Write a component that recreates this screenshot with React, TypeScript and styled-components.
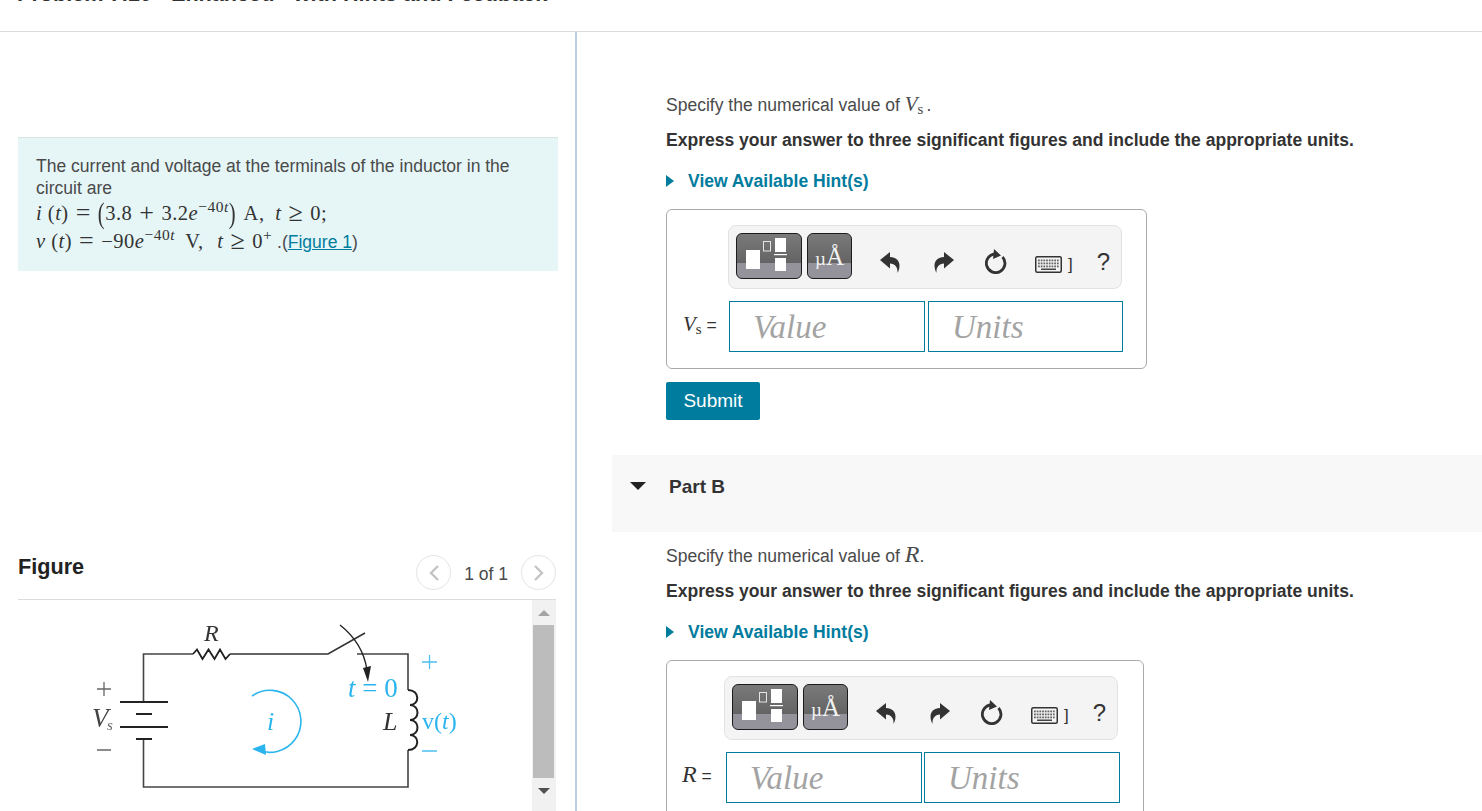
import React from 'react';
import styled, { createGlobalStyle } from 'styled-components';

const GlobalStyle = createGlobalStyle`
    html, body {
        margin: 0;
        padding: 0;
        background: #fff;
        font-family: "Liberation Sans", Arial, sans-serif;
        font-size: 17.55px;
        color: #4a4a4a;
    }
`;

const Page = styled.div`
    width: 1482px;
    height: 811px;
    overflow: hidden;
    display: flex;
    flex-direction: column;
`;

const Header = styled.header`
    height: 31px;
    flex: none;
    overflow: hidden;
    border-bottom: 1px solid #dcdcdc;
    padding-left: 17px;
`;

const Title = styled.h1`
    margin: -19px 0 0;
    font-size: 21.65px;
    line-height: 26px;
    font-weight: bold;
    color: #333;
    white-space: nowrap;
`;

const Columns = styled.div`
    flex: 1;
    display: flex;
    min-height: 0;
`;

const LeftPane = styled.div`
    width: 575px;
    flex: none;
    border-right: 2px solid #b9cee0;
    padding-top: 105px;
    display: flex;
    flex-direction: column;
    align-items: flex-start;
`;

const RightPane = styled.div`
    flex: 1;
    padding-left: 35px;
    padding-top: 62px;
`;

const Intro = styled.div`
    margin-left: 18px;
    width: 504px;
    height: 116px;
    padding: 17px 18px 0;
    background: #e6f6f7;
    border-top: 1px solid #d8e2e2;
    line-height: 22px;
    color: #4a4a4a;
`;

const MathLine = styled.div`
    font-family: "Liberation Serif", "DejaVu Serif", serif;
    font-size: 20.5px;
    letter-spacing: 0.5px;
    line-height: 28px;
    height: 28px;
    white-space: nowrap;
    color: #333;
`;

const Mi = styled.i`
    font-family: "Liberation Serif", serif;
`;

const Op = styled.span`
    font-size: 26px;
    line-height: 0;
    vertical-align: -1px;
    margin: 0 7px;
`;

const Paren = styled.span`
    display: inline-block;
    line-height: 20px;
    font-weight: 300;
    transform: scaleY(1.4);
`;

const Sup = styled.sup`
    font-size: 15.5px;
    line-height: 0;
    vertical-align: 8px;
`;

const Gap = styled.span<{ $w: number }>`
    display: inline-block;
    width: ${p => p.$w}px;
`;

const FigureLink = styled.a`
    font-family: "Liberation Sans", Arial, sans-serif;
    color: #007c9e;
    letter-spacing: 0;
    text-decoration: underline;
`;

const Plain = styled.span`
    font-family: "Liberation Sans", Arial, sans-serif;
    font-size: 17.55px;
    letter-spacing: 0;
    color: #4a4a4a;
`;

const FigureHead = styled.div`
    margin: 275px 0 0 18px;
    width: 538px;
    height: 54px;
    box-sizing: border-box;
    border-bottom: 1px solid #dcdcdc;
    display: flex;
    justify-content: space-between;
    align-items: flex-start;
`;

const FigureTitle = styled.h2`
    margin: 8px 0 0;
    font-size: 21.65px;
    line-height: 26px;
    font-weight: bold;
    color: #222;
`;

const Pager = styled.div`
    display: flex;
    align-items: center;
    margin-top: 9px;
`;

const PagerButton = styled.div`
    width: 33px;
    height: 33px;
    border: 1px solid #e4e4e4;
    border-radius: 50%;
    display: flex;
    align-items: center;
    justify-content: center;
    background: #fff;
`;

const PagerText = styled.span`
    margin: 3px 13px 0;
    color: #4a4a4a;
`;

const FigureBody = styled.div`
    margin-left: 18px;
    width: 538px;
    height: 211px;
    display: flex;
`;

const CircuitArea = styled.div`
    flex: 1;
    filter: blur(0.3px);
`;

const Scrollbar = styled.div`
    width: 24px;
    flex: none;
    background: #f1f1f1;
    display: flex;
    flex-direction: column;
    align-items: center;
    padding: 0 2px 0 1px;
    box-sizing: border-box;
`;

const ScrollArrow = styled.div<{ $down?: boolean }>`
    height: 25px;
    flex: none;
    display: flex;
    align-items: center;
    justify-content: center;
    &::before {
        content: "";
        border-left: 6px solid transparent;
        border-right: 6px solid transparent;
        ${p => p.$down ? 'border-top: 6px solid #505050;' : 'border-bottom: 6px solid #a3a3a3;'}
    }
`;

const ScrollThumb = styled.div`
    width: 100%;
    height: 153px;
    flex: none;
    background: #bcbcbc;
`;

const Part = styled.section`
    padding-left: 54px;
`;

const Prompt = styled.p<{ $top?: number }>`
    margin: ${p => p.$top ?? 0}px 0 0;
    line-height: 22px;
    color: #4a4a4a;
`;

const Instruction = styled.p`
    margin: 13px 0 0;
    line-height: 22px;
    font-weight: bold;
    color: #333;
`;

const Hint = styled.div`
    margin-top: 19px;
    height: 22px;
    display: flex;
    align-items: center;
    gap: 14px;
    font-weight: bold;
    color: #007c9e;
`;

const HintArrow = styled.span`
    border-top: 6px solid transparent;
    border-bottom: 6px solid transparent;
    border-left: 8px solid #007c9e;
`;

const AnswerBox = styled.div<{ $width: number; $pad: number }>`
    margin-top: 17px;
    width: ${p => p.$width}px;
    height: 160px;
    box-sizing: border-box;
    border: 1px solid #aaa;
    border-radius: 6px;
    padding: 15px 0 0 ${p => p.$pad}px;
`;

const Toolbar = styled.div`
    width: 394px;
    height: 64px;
    box-sizing: border-box;
    border: 1px solid #e2e2e2;
    border-radius: 8px;
    background: #f4f4f4;
    display: flex;
    align-items: flex-start;
    padding: 7px 0 0 7px;
`;

const ToolButton = styled.div<{ $width: number }>`
    width: ${p => p.$width}px;
    height: 46px;
    box-sizing: border-box;
    flex: none;
    margin-right: 5px;
    border: 1px solid #1c1c1c;
    border-radius: 6px;
    background: linear-gradient(#7a7a7a 0, #636363 67%, #94939c 67%, #94939c 100%);
    display: flex;
    align-items: center;
    justify-content: center;
`;

const UnitGlyph = styled.span`
    font-family: "Liberation Serif", serif;
    font-size: 25px;
    line-height: 30px;
    color: #f2f2f2;
    white-space: nowrap;
    margin-top: 4px;
`;

const MicroGlyph = styled.span`
    font-size: 19px;
`;

const IconSlot = styled.div<{ $left: number; $top?: number }>`
    margin-left: ${p => p.$left}px;
    margin-top: ${p => p.$top ?? 16}px;
    height: 25px;
    display: flex;
    align-items: center;
    flex: none;
`;

const HelpMark = styled.span`
    margin: 14px 0 0 24px;
    font-size: 24px;
    line-height: 30px;
    color: #333;
`;

const BracketMark = styled.span`
    margin-left: 6px;
    font-size: 17px;
    color: #333;
`;

const InputRow = styled.div`
    display: flex;
    align-items: center;
    margin-top: 12px;
`;

const SymbolLabel = styled.label<{ $width: number; $left: number }>`
    width: ${p => p.$width}px;
    margin-left: ${p => p.$left}px;
    margin-top: -2px;
    flex: none;
    font-size: 17.55px;
    color: #333;
    white-space: nowrap;
`;

const SerifLetter = styled.i<{ $size?: number }>`
    font-family: "Liberation Serif", serif;
    font-size: ${p => p.$size ?? 21}px;
    line-height: 0;
`;

const SubLetter = styled.span`
    font-family: "Liberation Serif", serif;
    font-size: 15px;
    vertical-align: -3px;
    line-height: 0;
`;

const Dot = styled.span`
    margin-left: 3px;
`;

const AnswerInput = styled.input<{ $gap: number; $width: number }>`
    width: ${p => p.$width}px;
    height: 51px;
    box-sizing: border-box;
    flex: none;
    margin-right: ${p => p.$gap}px;
    border: 1px solid #007c9e;
    border-radius: 0;
    padding: 2px 0 0 23px;
    background: #fff;
    font-family: "Liberation Serif", serif;
    font-style: italic;
    font-size: 33px;
    outline: none;
    &::placeholder {
        color: #a3a3a3;
        opacity: 1;
    }
`;

const SubmitButton = styled.button`
    display: block;
    margin-top: 13px;
    width: 94px;
    height: 38px;
    border: 0;
    border-radius: 2px;
    background: #007c9e;
    color: #fff;
    font-family: "Liberation Sans", Arial, sans-serif;
    font-size: 19px;
`;

const PartBand = styled.div`
    margin-top: 35px;
    height: 77px;
    background: #f8f8f8;
    display: flex;
    align-items: flex-start;
    padding: 21px 0 0 18px;
    box-sizing: border-box;
`;

const PartArrow = styled.span`
    margin-top: 6px;
    border-left: 8px solid transparent;
    border-right: 8px solid transparent;
    border-top: 8px solid #222;
`;

const PartTitle = styled.span`
    margin-left: 23px;
    font-size: 19px;
    font-weight: bold;
    line-height: 22px;
    color: #333;
`;

const Chevron = ({ flip }: { flip?: boolean }) => (
    <svg width="12" height="18" viewBox="0 0 12 18" fill="none" stroke="#c4c4c4" strokeWidth="2.4">
        <path d={flip ? 'M2 2l7 7-7 7' : 'M10 2L3 9l7 7'} />
    </svg>
);

const TemplateIcon = () => (
    <svg width="46" height="36" viewBox="0 0 46 36" fill="#fff">
        <rect x="0" y="12" width="14" height="19" />
        <rect x="17.5" y="3.5" width="7" height="9.5" fill="none" stroke="#e4e4e4" strokeWidth="1" />
        <rect x="29" y="0" width="11" height="14" />
        <rect x="28" y="16" width="13" height="1.2" />
        <rect x="29" y="20" width="11" height="13" />
    </svg>
);

const UndoIcon = ({ flip }: { flip?: boolean }) => (
    <svg width="20" height="22" viewBox="0 0 20 22" fill="#333" style={flip ? { transform: 'scaleX(-1)' } : undefined}>
        <path d="M0 9 10 1v5c6 0 9.5 4 9.5 8.5 0 3-1 5.5-2 7.5 .5-5-2-9.5-7.5-9.5v5z" />
    </svg>
);

const ResetIcon = () => (
    <svg width="22" height="25" viewBox="0 0 22 25" fill="none">
        <path d="M10.5 5A9.3 9.3 0 1 0 17.5 8" stroke="#333" strokeWidth="2.8" />
        <path d="M9 0l7 6.5L8 10z" fill="#333" />
    </svg>
);

const KeyboardIcon = () => (
    <svg width="27" height="17" viewBox="0 0 27 17">
        <rect x="0.75" y="0.75" width="25.5" height="15.5" rx="1.5" fill="#f4f4f4" stroke="#333" strokeWidth="1.5" />
        {[3.5, 6.5, 9.5].map(y => Array.from({ length: 8 }, (_, i) => (
            <rect key={`${y}-${i}`} x={3 + i * 2.7} y={y} width="1.8" height="1.8" fill="#666" />
        )))}
        <rect x="6" y="12.5" width="15" height="1.5" fill="#444" />
    </svg>
);

const Circuit = () => (
    <svg width="514" height="211" viewBox="18 600 514 211">
        <g fill="none" stroke="#444" strokeWidth="1.6">
            <path d="M143.5 702V654H193" />
            <path d="M230 654H328L365 633" stroke="#333" />
            <path d="M357 654H408V690" />
            <path d="M408 750V787H143.5V739" />
            <path d="M193 654l4-4.5 5.5 9.5 6-9.5 6 9.5 5.5-9.5 5.5 9.5 4.5-5" stroke="#222" strokeWidth="1.8" />
            <path d="M408 690c12 0 12 15 2 15c10 0 10 15 0 15c10 0 10 15 0 15c10 0 10 15-2 15" stroke="#222" strokeWidth="2" />
        </g>
        <g stroke="#222" strokeWidth="1.8">
            <path d="M120 702H168M136 714H152M120 727H168M136 739H152" />
        </g>
        <path d="M340 625C354 636 364 650 367 670" fill="none" stroke="#222" strokeWidth="1.4" />
        <path d="M363 668L371 666L368 682z" fill="#222" />
        <path d="M252 696A31 31 0 1 1 256 749" fill="none" stroke="#2bb5ee" strokeWidth="1.6" />
        <path d="M252 749L265 744L266 755z" fill="#2bb5ee" />
        <g fontFamily="'Liberation Serif', serif" fontSize="24">
            <text x="204" y="641" fontStyle="italic" fill="#333">R</text>
            <text x="92" y="727" fontSize="27" fontStyle="italic" fill="#444">V</text>
            <text x="107" y="730" fontSize="15" fontStyle="italic" fill="#666">s</text>
            <text x="383" y="730" fontSize="26" fontStyle="italic" fill="#333">L</text>
            <text x="267" y="730" fontSize="26" fontStyle="italic" fill="#2bb5ee">i</text>
            <text x="348" y="697" fontSize="27" fill="#2bb5ee"><tspan fontStyle="italic">t</tspan> = 0</text>
            <text x="422" y="729" fontSize="24" fill="#2bb5ee">v(<tspan fontStyle="italic">t</tspan>)</text>
        </g>
        <g stroke="#666" strokeWidth="1.3">
            <path d="M97 689H111M104 682V696M97 750H111" />
        </g>
        <g stroke="#4cc0ef" strokeWidth="1.3">
            <path d="M422 662H437M429.5 655V669M422 751H437" />
        </g>
    </svg>
);

const AnswerForm = ({ width, pad, labelWidth, labelLeft, gap, unitsWidth, children }: {
    width: number; pad: number; labelWidth: number; labelLeft: number; gap: number; unitsWidth: number; children: React.ReactNode;
}) => (
    <AnswerBox $width={width} $pad={pad}>
        <Toolbar>
            <ToolButton $width={66}><TemplateIcon /></ToolButton>
            <ToolButton $width={45}><UnitGlyph><MicroGlyph>µ</MicroGlyph>Å</UnitGlyph></ToolButton>
            <IconSlot $left={23}><UndoIcon /></IconSlot>
            <IconSlot $left={34}><UndoIcon flip /></IconSlot>
            <IconSlot $left={31}><ResetIcon /></IconSlot>
            <IconSlot $left={28} $top={19}><KeyboardIcon /><BracketMark>]</BracketMark></IconSlot>
            <HelpMark>?</HelpMark>
        </Toolbar>
        <InputRow>
            <SymbolLabel $width={labelWidth} $left={labelLeft}>{children}</SymbolLabel>
            <AnswerInput $gap={gap} $width={196} placeholder="Value" readOnly />
            <AnswerInput $gap={0} $width={unitsWidth} placeholder="Units" readOnly />
        </InputRow>
    </AnswerBox>
);

const App = () => (
    <>
        <GlobalStyle />
        <Page>
            <Header>
                <Title>Problem 7.10 - Enhanced - with Hints and Feedback</Title>
            </Header>
            <Columns>
                <LeftPane>
                    <Intro>
                        The current and voltage at the terminals of the inductor in the circuit are
                        <MathLine>
                            <Mi>i</Mi> (<Mi>t</Mi>)<Op>=</Op><Paren>(</Paren>3.8<Op>+</Op>3.2<Mi>e</Mi><Sup>−40<Mi>t</Mi></Sup><Paren>)</Paren><Gap $w={3} /> A, <Gap $w={5} /><Mi>t</Mi><Op>≥</Op>0;
                        </MathLine>
                        <MathLine>
                            <Mi>v</Mi> (<Mi>t</Mi>)<Op>=</Op>−90<Mi>e</Mi><Sup>−40<Mi>t</Mi></Sup><Gap $w={5} /> V, <Gap $w={8} /><Mi>t</Mi><Op>≥</Op>0<Sup>+</Sup>
                            <Plain> .(<FigureLink>Figure 1</FigureLink>)</Plain>
                        </MathLine>
                    </Intro>
                    <FigureHead>
                        <FigureTitle>Figure</FigureTitle>
                        <Pager>
                            <PagerButton><Chevron /></PagerButton>
                            <PagerText>1 of 1</PagerText>
                            <PagerButton><Chevron flip /></PagerButton>
                        </Pager>
                    </FigureHead>
                    <FigureBody>
                        <CircuitArea><Circuit /></CircuitArea>
                        <Scrollbar>
                            <ScrollArrow />
                            <ScrollThumb />
                            <ScrollArrow $down />
                        </Scrollbar>
                    </FigureBody>
                </LeftPane>
                <RightPane>
                    <Part>
                        <Prompt>Specify the numerical value of <SerifLetter>V</SerifLetter><SubLetter>s</SubLetter><Dot>.</Dot></Prompt>
                        <Instruction>Express your answer to three significant figures and include the appropriate units.</Instruction>
                        <Hint><HintArrow />View Available Hint(s)</Hint>
                        <AnswerForm width={481} pad={61} labelWidth={46} labelLeft={-45} gap={3} unitsWidth={195}>
                            <SerifLetter>V</SerifLetter><SubLetter>s</SubLetter> =
                        </AnswerForm>
                        <SubmitButton>Submit</SubmitButton>
                    </Part>
                    <PartBand>
                        <PartArrow />
                        <PartTitle>Part B</PartTitle>
                    </PartBand>
                    <Part>
                        <Prompt $top={13}>Specify the numerical value of <SerifLetter $size={24}>R</SerifLetter>.</Prompt>
                        <Instruction>Express your answer to three significant figures and include the appropriate units.</Instruction>
                        <Hint><HintArrow />View Available Hint(s)</Hint>
                        <AnswerForm width={478} pad={57} labelWidth={44} labelLeft={-42} gap={2} unitsWidth={196}>
                            <SerifLetter $size={24}>R</SerifLetter> =
                        </AnswerForm>
                    </Part>
                </RightPane>
            </Columns>
        </Page>
    </>
);

export default App;
